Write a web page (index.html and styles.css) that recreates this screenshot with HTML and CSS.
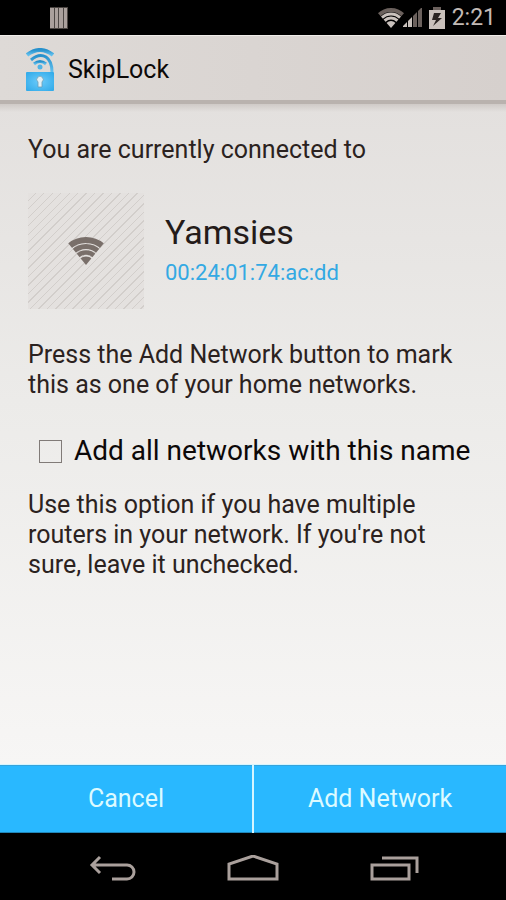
FILE: index.html
```html
<!DOCTYPE html>
<html lang="en">
<head>
<meta charset="utf-8">
<meta name="viewport" content="width=device-width, initial-scale=1">
<title>SkipLock</title>
<link rel="stylesheet" href="styles.css">
</head>
<body>
<div class="screen">
  <div class="status-bar">
    <svg class="status-note" width="18" height="22" viewBox="0 0 18 22" aria-hidden="true">
      <path fill="#4c4643" d="M0 0h18v22H0z"/>
      <path fill="#aaa09c" d="M0 1h4v20H0zM5 1h3v20H5zM9 1h4v20H9zM14 1h3v20h-3z"/>
    </svg>
    <div class="status-icons">
      <svg width="47" height="20" viewBox="0 0 47 20" aria-hidden="true">
        <defs><clipPath id="status-wedge"><path d="M14 20L0 4V0h28v4z"/></clipPath></defs>
        <g clip-path="url(#status-wedge)" fill="none">
          <circle cx="14" cy="19" r="17" stroke="#6b615d" stroke-width="4"/>
          <circle cx="14" cy="19" r="13" stroke="#c9c1bc" stroke-width="3"/>
          <circle cx="14" cy="19" r="9" stroke="#c9c1bc" stroke-width="3"/>
          <circle cx="14" cy="19" r="6" fill="#c9c1bc"/>
        </g>
        <path fill="#c9c1bc" d="M26 19v-1l4-4v5zM31 19v-6l4-4v10z"/>
        <path fill="#6b615d" d="M36 19V8l4-4v15zM41 19V3l4-4v20z"/>
      </svg>
      <svg width="16" height="22" viewBox="0 0 16 22" aria-hidden="true">
        <path fill="#6b615d" d="M4 0h8v3H4z"/>
        <path fill="#c9c1bc" d="M0 3h16v19H0z"/>
        <path fill="#2a2422" d="M5 6h7l-3 5h4L4 19l3-6H3z"/>
      </svg>
      <span class="clock">2:21</span>
    </div>
  </div>

  <header class="action-bar">
    <svg class="app-icon" width="28" height="44" viewBox="0 0 28 44" aria-hidden="true">
      <defs>
        <linearGradient id="arc-blue" x1="0" y1="0" x2="0" y2="1">
          <stop offset="0" stop-color="#2791cc"/><stop offset="1" stop-color="#62c0ee"/>
        </linearGradient>
        <radialGradient id="body-blue" cx=".5" cy=".5" r=".7">
          <stop offset="0" stop-color="#6bcbfb"/><stop offset="1" stop-color="#2fa9e8"/>
        </radialGradient>
      </defs>
      <g fill="none" stroke="url(#arc-blue)">
        <path stroke-width="4" d="M1 7Q14-3 27 7"/>
        <path stroke-width="3" d="M5 12Q13 5 20 9Q26 13 26 24"/>
        <path stroke-width="3" d="M8 16Q14 11 20 16"/>
      </g>
      <circle cx="14" cy="19" r="2.5" fill="#4fb4e6"/>
      <rect y="24" width="28" height="19" rx="1" fill="url(#body-blue)"/>
      <path fill="#e3f0f5" stroke="#6b9db5" stroke-width=".8" d="M12 34a3.2 3.2 0 1 1 4 0v5h-4z"/>
    </svg>
    <h1>SkipLock</h1>
  </header>

  <main class="content">
    <p>You are currently connected to</p>
    <section class="network">
      <div class="network-tile">
        <svg width="36" height="30" viewBox="0 0 36 30" aria-hidden="true">
          <defs><clipPath id="tile-wedge"><path d="M18 29L0 7V0h36v7z"/></clipPath></defs>
          <g clip-path="url(#tile-wedge)" fill="none" stroke="#796f6a">
            <circle cx="18" cy="29" r="25" stroke-width="6"/>
            <circle cx="18" cy="29" r="18.5" stroke-width="5"/>
            <circle cx="18" cy="29" r="12.5" stroke-width="4.5"/>
            <circle cx="18" cy="29" r="8.5" fill="#796f6a" stroke="none"/>
          </g>
        </svg>
      </div>
      <div class="network-text">
        <h2>Yamsies</h2>
        <div class="address">00:24:01:74:ac:dd</div>
      </div>
    </section>
    <p>Press the Add Network button to mark this as one of your home networks.</p>
    <label class="option"><input type="checkbox"><span>Add all networks with this name</span></label>
    <p>Use this option if you have multiple routers in your network. If you're not sure, leave it unchecked.</p>
  </main>

  <div class="actions">
    <button type="button">Cancel</button>
    <button type="button">Add Network</button>
  </div>

  <nav class="nav-bar" aria-label="System">
    <button type="button" aria-label="Back">
      <svg width="52" height="28" viewBox="0 0 52 28"><path d="M7 10h35a7 7 0 0 1 0 14H27M15 2L7 10l8 8"/></svg>
    </button>
    <button type="button" aria-label="Home">
      <svg width="52" height="28" viewBox="0 0 52 28"><path d="M2 24V9L26 1l24 8v15z"/></svg>
    </button>
    <button type="button" aria-label="Recent apps">
      <svg width="52" height="28" viewBox="0 0 52 28"><path d="M3 10h37v14H3zM13 3h35v15"/></svg>
    </button>
  </nav>
</div>
</body>
</html>
```
FILE: styles.css
```css
* {
  box-sizing: border-box;
}

body {
  margin: 0;
  background: #000;
  color: #2b2220;
  font-family: Roboto, "Liberation Sans", sans-serif;
  font-size: 25px;
  line-height: 30px;
}

h1, h2, p {
  margin: 0;
  font-weight: 400;
}

svg {
  display: block;
  flex: none;
}

.screen {
  display: flex;
  flex-direction: column;
  min-height: 100vh;
}

.status-bar {
  display: flex;
  justify-content: space-between;
  align-items: center;
  height: 35px;
  padding: 0 10px 0 50px;
  background: #000;
}

.status-icons {
  display: flex;
  align-items: center;
  gap: 5px;
}

.clock {
  padding-left: 2px;
  color: #c2bab6;
  font-size: 23px;
}

.action-bar {
  display: flex;
  align-items: center;
  gap: 14px;
  height: 69px;
  padding: 3px 26px 0;
  background: linear-gradient(90deg, #dedad7, #d6d0cd);
  border-top: 1px solid #f0edea;
  border-bottom: 4px solid #b9b2ae;
}

.action-bar h1 {
  color: #0c0908;
  font-size: 25px;
}

.content {
  flex: 1;
  padding: 31px 28px;
  background:
    linear-gradient(#cfcac7, transparent 8px),
    linear-gradient(#e3e0de, #ecebe9 45%, #f7f6f5);
}

.network {
  display: flex;
  align-items: center;
  gap: 21px;
  margin: 28px 0 31px;
}

.network-tile {
  display: grid;
  place-items: center;
  width: 116px;
  height: 116px;
  background: repeating-linear-gradient(135deg, #e4e1df 0 5px, #d2cecb 5px 6px);
}

.network-text {
  display: grid;
  gap: 4px;
  padding-bottom: 4px;
}

h2 {
  color: #241b19;
  font-size: 34px;
  line-height: 44px;
}

.address {
  color: #33a9e3;
  font-size: 22px;
}

.option {
  display: flex;
  align-items: center;
  gap: 12px;
  margin: 36px -20px 24px 11px;
  color: #0c0808;
  font-size: 28px;
  white-space: nowrap;
}

.option input {
  appearance: none;
  flex: none;
  width: 23px;
  height: 23px;
  margin: 0;
  border: 1px solid #817b78;
}

.option input:checked {
  background: #33b5e5;
}

.actions {
  display: grid;
  grid-template-columns: 1fr 1fr;
  gap: 2px;
  background: #d5f5ff;
  border-top: 1px solid #d5f5ff;
}

.actions button {
  height: 68px;
  padding: 0;
  border: 0;
  border-top: 1px solid #35a3dc;
  border-bottom: 1px solid #2186b8;
  background: #29b8ff;
  color: #dcfaff;
  font: inherit;
}

.nav-bar {
  display: flex;
  justify-content: center;
  gap: 90px;
  height: 67px;
  padding-top: 22px;
  background: #000;
}

.nav-bar button {
  align-self: flex-start;
  padding: 0;
  border: 0;
  background: none;
}

.nav-bar path {
  fill: none;
  stroke: #aaa09c;
  stroke-width: 3;
}
```
